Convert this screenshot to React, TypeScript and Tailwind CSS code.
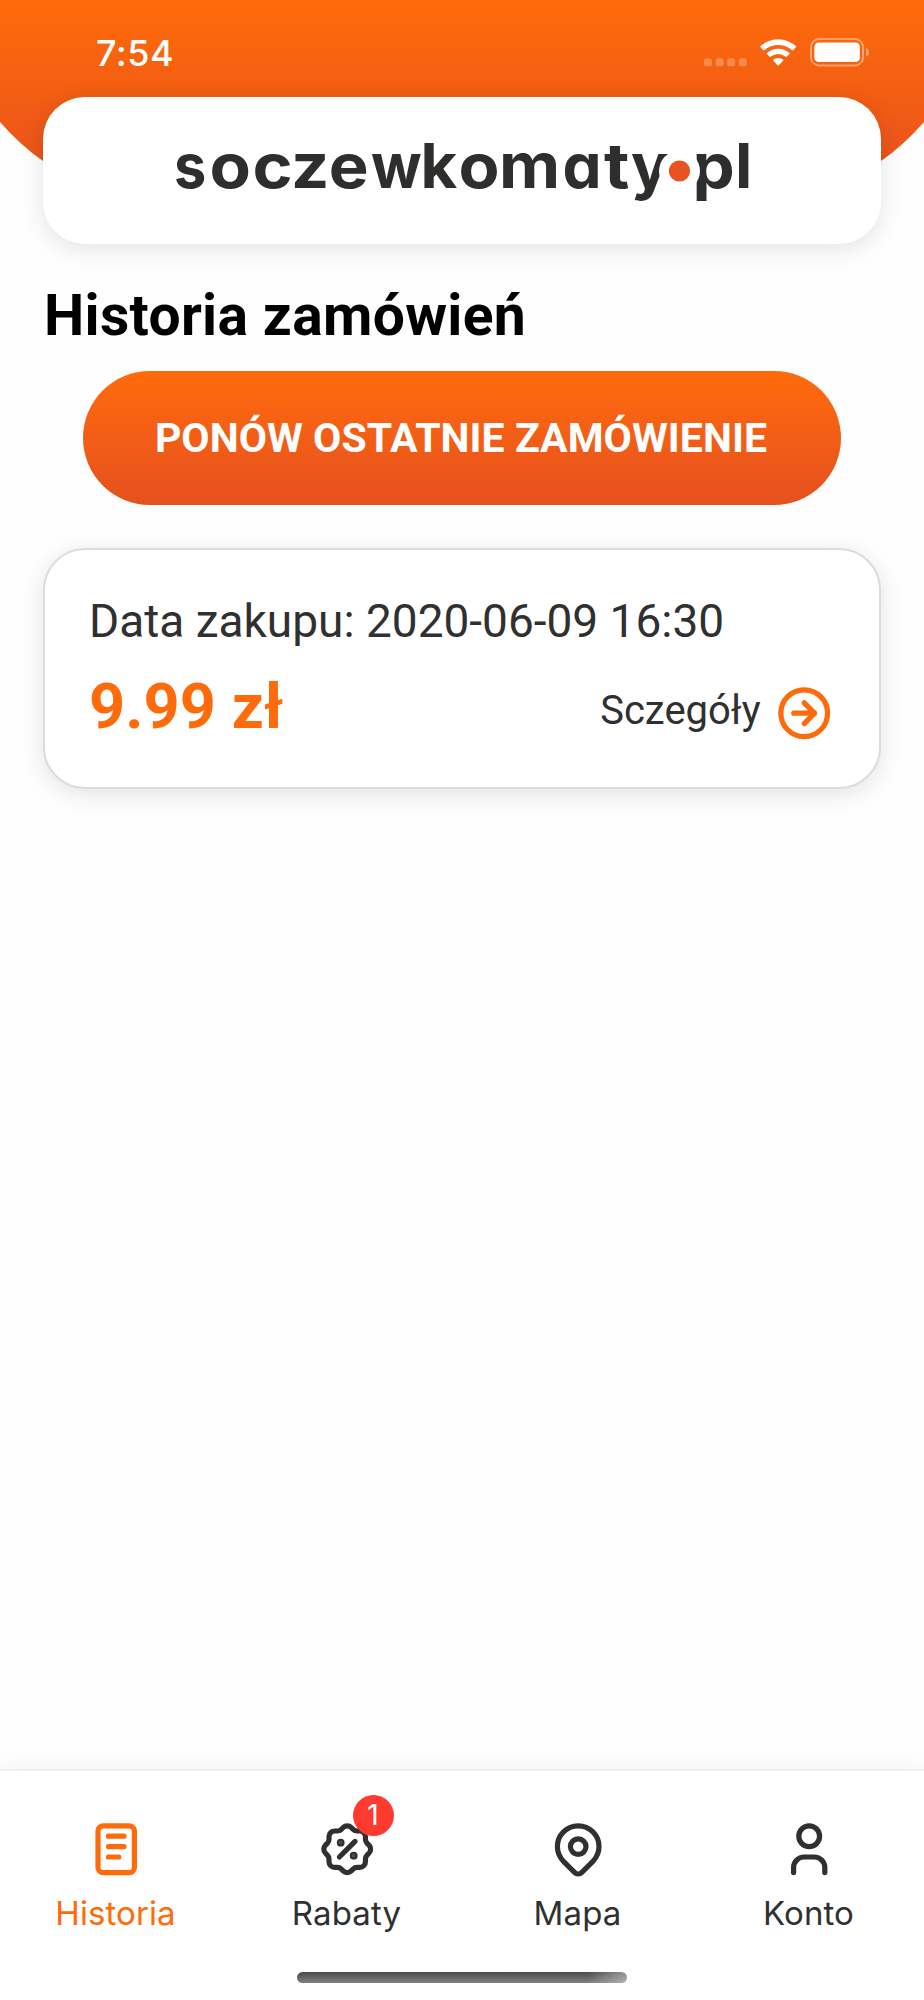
import type { ReactNode } from "react";

type Order = { id: number; date: string; price: string };

const orders: Order[] = [{ id: 1, date: "2020-06-09 16:30", price: "9.99 zł" }];

function Icon({ children, className = "" }: { children: ReactNode; className?: string }) {
  return (
    <svg
      viewBox="0 0 24 24"
      fill="none"
      stroke="currentColor"
      strokeWidth="2"
      strokeLinecap="round"
      strokeLinejoin="round"
      className={`size-[62.4px] shrink-0 ${className}`}
    >
      {children}
    </svg>
  );
}

const tabs = [
  {
    label: "Historia",
    active: true,
    icon: (
      <>
        <rect x="5" y="3" width="14" height="18" rx="2" />
        <path d="M9 7h6M9 11h6M9 15h4" />
      </>
    ),
  },
  {
    label: "Rabaty",
    badge: 1,
    icon: (
      <>
        <path d="M9 15l6-6" />
        <circle cx="9.5" cy="9.5" r=".5" fill="currentColor" />
        <circle cx="14.5" cy="14.5" r=".5" fill="currentColor" />
        <path d="M5 7.2a2.2 2.2 0 0 1 2.2-2.2h1a2.2 2.2 0 0 0 1.55-.64l.7-.7a2.2 2.2 0 0 1 3.12 0l.7.7c.412.41.97.64 1.55.64h1a2.2 2.2 0 0 1 2.2 2.2v1c0 .58.23 1.138.64 1.55l.7.7a2.2 2.2 0 0 1 0 3.12l-.7.7a2.2 2.2 0 0 0-.64 1.55v1a2.2 2.2 0 0 1-2.2 2.2h-1a2.2 2.2 0 0 0-1.55.64l-.7.7a2.2 2.2 0 0 1-3.12 0l-.7-.7a2.2 2.2 0 0 0-1.55-.64h-1a2.2 2.2 0 0 1-2.2-2.2v-1a2.2 2.2 0 0 0-.64-1.55l-.7-.7a2.2 2.2 0 0 1 0-3.12l.7-.7a2.2 2.2 0 0 0 .64-1.55v-1" />
      </>
    ),
  },
  {
    label: "Mapa",
    icon: (
      <>
        <circle cx="12" cy="11" r="3" />
        <path d="M17.657 16.657l-4.243 4.243a2 2 0 0 1-2.827 0l-4.244-4.243a8 8 0 1 1 11.314 0z" />
      </>
    ),
  },
  {
    label: "Konto",
    icon: (
      <>
        <circle cx="12" cy="7" r="4" />
        <path d="M6 21v-2a4 4 0 0 1 4-4h4a4 4 0 0 1 4 4v2" />
      </>
    ),
  },
];

function StatusBar() {
  return (
    <div className="relative flex h-[97px] items-start justify-between pt-[31px] pr-[54px] pl-[96px] text-white">
      <span className="font-[Inter,sans-serif] text-[36px] leading-[44px] font-medium tracking-[0.5px]">7:54</span>
      <svg className="mt-[5px]" width="167" height="32" viewBox="703 36 167 32" fill="currentColor">
        <g opacity=".25">
          <rect x="704" y="58.3" width="8" height="8" rx="2.5" />
          <rect x="715.7" y="58.3" width="8" height="8" rx="2.5" />
          <rect x="727.2" y="58.3" width="8" height="8" rx="2.5" />
          <rect x="738.8" y="58.3" width="8" height="8" rx="2.5" />
        </g>
        <path d="M760 46.600a26.400 26.400 0 0 1 36.400 0l-3 3.400q-.8.700-1.600 0a21 21 0 0 0-27.200 0q-.8.700-1.600 0z" />
        <path d="M766.400 53.400a17 17 0 0 1 23.600 0l-3 3.100q-.8.700-1.600 0a11.600 11.600 0 0 0-14.400 0q-.8.700-1.600 0z" />
        <path d="M772.800 60a8.200 8.200 0 0 1 10.800 0l-4.700 5.300q-.7.600-1.400 0z" />
        <rect x="811" y="39.1" width="52" height="26.4" rx="8" fill="none" stroke="currentColor" strokeWidth="2" opacity=".4" />
        <rect x="814.3" y="42.5" width="45.6" height="19.5" rx="4.5" />
        <path d="M866 48v8.800c3.900-1.500 3.900-7.300 0-8.800z" opacity=".45" />
      </svg>
    </div>
  );
}

// [letter, x, horizontal stretch]
const logoLetters: [string, number, number][] = [
  ["s", 174, 0.93],
  ["o", 209.5, 1.09],
  ["c", 252.5, 1.1],
  ["z", 291, 1.08],
  ["e", 328.8, 1.08],
  ["w", 371, 0.96],
  ["k", 420.5, 1.02],
  ["o", 458.5, 1.08],
  ["m", 499, 1.08],
  ["a", 562.5, 1],
  ["t", 604, 1.12],
  ["y", 631, 1.02],
  ["p", 692.5, 1.08],
  ["l", 735, 1.03],
];

function Logo() {
  return (
    <svg className="overflow-visible" width="580" height="74" viewBox="172 134 580 74" role="img" aria-label="soczewkomaty.pl">
      <g
        fill="#2e2e2d"
        className="font-[Inter,sans-serif] text-[62px] font-bold"
        style={{ fontFeatureSettings: '"cv11"' }}
      >
        {logoLetters.map(([letter, x, stretch]) => (
          <text key={x} transform={`translate(${x} 188) scale(${stretch} 1)`}>
            {letter}
          </text>
        ))}
      </g>
      <circle cx="679.5" cy="171" r="20.5" fill="#fff" />
      <circle cx="679.5" cy="171" r="10.6" fill="#e8531f" />
    </svg>
  );
}

function OrderCard({ order }: { order: Order }) {
  return (
    <article className="mt-[43px] h-[241px] rounded-[42px] border-2 border-[#dcdcdc] bg-white px-[44px] pt-[43px] shadow-[0_5px_24px_rgba(0,0,0,0.11)]">
      <p className="text-[46px] leading-[56px] text-[#303030]">Data zakupu: {order.date}</p>
      <div className="flex items-center justify-between">
        <strong className="text-[63px] leading-[116px] font-bold tracking-[0.1px] text-[#ff6a0a]">{order.price}</strong>
        <button className="flex items-center gap-[12px] pt-[12px] text-[40px] text-[#303030]">
          <span className="-mt-[3px]">Sczegóły</span>
          <Icon className="text-[#ff6a0a]">
            <circle cx="12" cy="12" r="9" />
            <path d="M8 12h8M12 8l4 4-4 4" />
          </Icon>
        </button>
      </div>
    </article>
  );
}

function TabBar() {
  return (
    <nav className="border-t-2 border-[#f0f0f0] bg-white font-[Inter,sans-serif] shadow-[0_0_24px_rgba(0,0,0,0.06)]">
      <div className="grid h-[201px] grid-cols-4 pt-[47px]">
        {tabs.map((tab) => (
          <button
            key={tab.label}
            className={`flex flex-col items-center ${tab.active ? "text-[#ff6a0a]" : "text-[#303030]"}`}
          >
            <span className="relative ml-[2px]">
              <Icon>{tab.icon}</Icon>
              {tab.badge && (
                <span className="absolute -top-[23px] left-[37px] flex size-[41px] items-center justify-center rounded-full bg-[#ff3b30] pr-[2px] pb-[2px] text-[29px] leading-none font-normal text-white">
                  {tab.badge}
                </span>
              )}
            </span>
            <span className="mt-[13px] text-[33px] leading-[40px] font-normal tracking-[0.1px]">{tab.label}</span>
          </button>
        ))}
      </div>
      <div className="mx-auto mb-[17px] h-[11px] w-[330px] rounded-full bg-[linear-gradient(to_right,transparent_88%,rgba(255,255,255,0.4)),linear-gradient(#4a4a4a,#808080)]" />
    </nav>
  );
}

export default function App() {
  return (
    <div className="relative flex h-[2000px] w-full flex-col overflow-hidden bg-[#fefefe] font-[Roboto,sans-serif]">
      {/* curved header background */}
      <svg className="absolute top-0 left-0" width="924" height="232" viewBox="0 0 924 232">
        <defs>
          <linearGradient id="header" x1="0" y1="0" x2="0" y2="176" gradientUnits="userSpaceOnUse">
            <stop stopColor="#ff6b09" />
            <stop offset="1" stopColor="#e8521d" />
          </linearGradient>
        </defs>
        <path d="M0 0H924V122Q904 145 881 161Q760 230 462 230T43 161Q20 145 0 122Z" fill="url(#header)" />
      </svg>

      <StatusBar />

      <main className="relative flex-1 px-[43px]">
        <header className="flex h-[147px] justify-center rounded-[42px] bg-white pt-[37px] shadow-[0_5px_24px_rgba(0,0,0,0.11)]">
          <Logo />
        </header>

        <h1 className="mt-[38px] pl-px text-[57px] leading-[68px] font-bold tracking-[0.32px] text-black">Historia zamówień</h1>

        <button className="mx-auto mt-[21px] flex h-[134px] w-[758px] items-center justify-center rounded-full bg-linear-to-b from-[#ff6b09] to-[#e6501e] pt-[2px] pr-[2px] text-[41px] font-bold tracking-[0.04px] text-white">
          PONÓW OSTATNIE ZAMÓWIENIE
        </button>

        {orders.map((order) => (
          <OrderCard key={order.id} order={order} />
        ))}
      </main>

      <TabBar />
    </div>
  );
}
